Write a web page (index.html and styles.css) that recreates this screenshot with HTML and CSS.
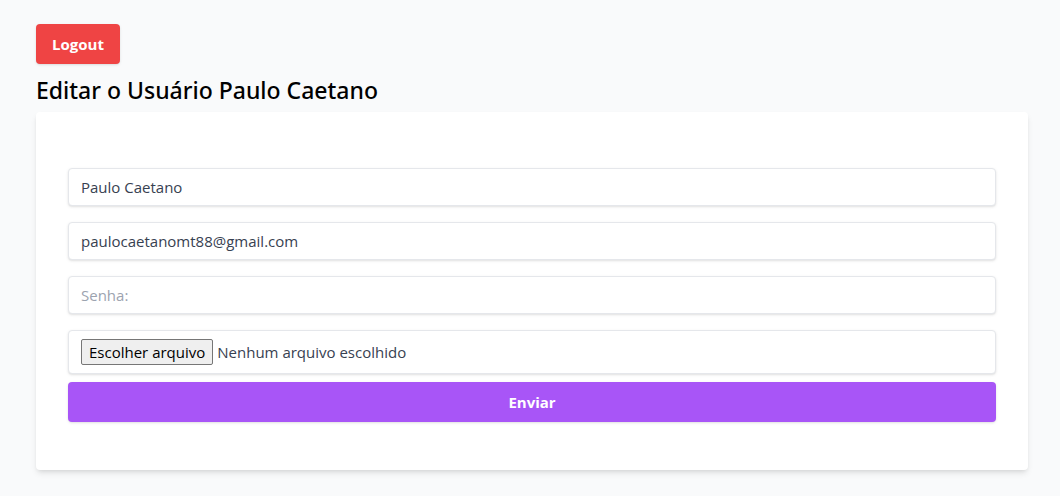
FILE: index.html
```html
<!DOCTYPE html>
<html lang="pt-BR">
<head>
  <meta charset="utf-8">
  <meta name="viewport" content="width=device-width, initial-scale=1">
  <title>Editar o Usuário</title>
  <link rel="stylesheet" href="styles.css">
</head>
<body>
  <main class="page">
    <button class="btn btn-logout" type="button">Logout</button>
    <h1 class="title">Editar o Usuário Paulo Caetano</h1>
    <form class="card">
      <div class="fields">
        <input class="field" type="text" name="name" aria-label="Nome" value="Paulo Caetano">
        <input class="field" type="email" name="email" aria-label="E-mail" value="paulocaetanomt88@gmail.com">
        <input class="field" type="password" name="password" aria-label="Senha" placeholder="Senha:">
        <label class="field field-file" for="image">
          <input class="file-input" type="file" id="image" name="image">
          <span class="file-button">Escolher arquivo</span>
          <span>Nenhum arquivo escolhido</span>
        </label>
      </div>
      <button class="btn btn-submit" type="submit">Enviar</button>
    </form>
  </main>
</body>
</html>
```
FILE: styles.css
```css
*,
*::before,
*::after {
  box-sizing: border-box;
}

body {
  margin: 0;
  background: #f9fafb;
  color: #000;
  font-family: "Segoe UI", "Open Sans", "Noto Sans", sans-serif;
  font-size: 15px;
  line-height: 24px;
}

.page {
  padding: 24px 32px 24px 36px;
}

.btn {
  border: 0;
  border-radius: 4px;
  padding: 8px 16px;
  color: #fff;
  font: inherit;
  font-weight: 700;
  cursor: pointer;
  box-shadow: 0 1px 3px rgba(0, 0, 0, 0.1), 0 1px 2px -1px rgba(0, 0, 0, 0.1);
}

.btn-logout {
  display: block;
  background: #ef4444;
}

.btn-submit {
  width: 100%;
  background: #a855f7;
}

.title {
  margin: 0;
  padding: 10px 0 6px;
  font-family: "Segoe UI", "Noto Sans", sans-serif;
  font-size: 23px;
  font-weight: 500;
  line-height: 32px;
}

.card {
  display: flex;
  flex-direction: column;
  gap: 8px;
  padding: 56px 32px 48px;
  border-radius: 4px;
  background: #fff;
  box-shadow: 0 4px 6px -1px rgba(0, 0, 0, 0.1), 0 2px 4px -2px rgba(0, 0, 0, 0.1);
}

.fields {
  display: flex;
  flex-direction: column;
  gap: 16px;
}

.field {
  width: 100%;
  padding: 8px 12px;
  border: 1px solid #e5e7eb;
  border-radius: 4px;
  background: #fff;
  color: #374151;
  font: inherit;
  line-height: 20px;
  box-shadow: 0 1px 3px rgba(0, 0, 0, 0.1), 0 1px 2px -1px rgba(0, 0, 0, 0.1);
}

.field::placeholder {
  color: #9ca3af;
  opacity: 1;
}

.field-file {
  position: relative;
  display: flex;
  align-items: center;
  gap: 4px;
}

.file-input {
  position: absolute;
  inset: 0;
  width: 100%;
  opacity: 0;
}

.file-button {
  padding: 2px 7px;
  border: 1px solid #767676;
  border-radius: 2px;
  background: #efefef;
  color: #000;
  line-height: 20px;
}
```
